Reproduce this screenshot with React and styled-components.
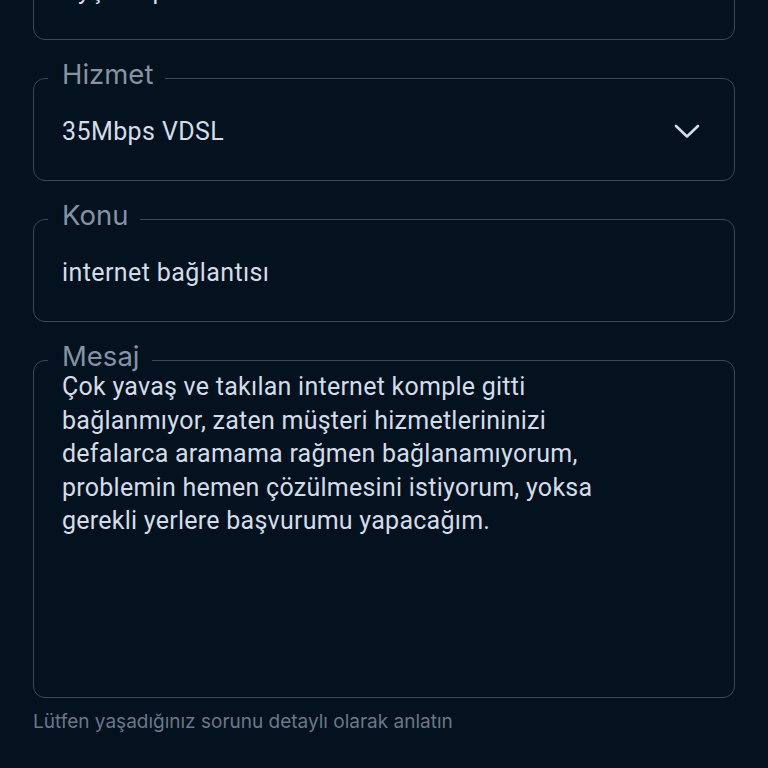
import React from "react";
import styled, { createGlobalStyle } from "styled-components";

const GlobalStyle = createGlobalStyle`
  html, body {
    margin: 0;
    padding: 0;
    background: #04111f;
    overflow: hidden;
  }
`;

const Page = styled.div`
  min-height: 100vh;
  background: #04111f;
  box-sizing: border-box;
  padding: 0 33px;
`;

const Form = styled.form`
  display: flex;
  flex-direction: column;
  gap: 28px;
  margin-top: -73px;
`;

const Field = styled.fieldset`
  margin: 0;
  padding: 0 28px 0 28px;
  border: 1.5px solid #3a4858;
  border-radius: 12px;
  min-width: 0;
`;

const Label = styled.legend`
  margin-left: -14px;
  padding: 0 12px 0 14px;
  line-height: 20px;
  font-family: Inter, "Noto Sans", sans-serif;
  font-size: 27.5px;
  color: #8593a3;

  span {
    display: block;
    transform: translateY(-4px);
  }
`;

const Row = styled.div`
  display: flex;
  align-items: center;
  justify-content: space-between;
  height: 86px;
  padding-bottom: 6px;
`;

const Value = styled.div`
  font-family: Roboto, "Noto Sans", sans-serif;
  font-size: 25px;
  letter-spacing: 0.4px;
  color: #d3dde9;
`;

const Chevron = styled.svg`
  width: 26px;
  height: 15px;
  margin-right: 6px;
`;

const Message = styled.div`
  height: 327px;
  font-family: Roboto, "Noto Sans", sans-serif;
  font-size: 25px;
  letter-spacing: 0.25px;
  line-height: 33.5px;
  color: #d3dde9;
  white-space: pre-line;
`;

const Helper = styled.div`
  margin: -16px 0 0 0;
  font-family: Inter, "Noto Sans", sans-serif;
  font-size: 19px;
  color: #6c7888;
`;

function OutlinedField({ label, children }) {
  return (
    <Field>
      <Label>
        <span>{label}</span>
      </Label>
      {children}
    </Field>
  );
}

const message = `Çok yavaş ve takılan internet komple gitti
bağlanmıyor, zaten müşteri hizmetlerininizi
defalarca aramama rağmen bağlanamıyorum,
problemin hemen çözülmesini istiyorum, yoksa
gerekli yerlere başvurumu yapacağım.`;

export default function App() {
  return (
    <Page>
      <GlobalStyle />
      <Form>
        <OutlinedField label="Ad Soyad">
          <Row>
            <Value>Ayşe Yapıcı</Value>
          </Row>
        </OutlinedField>
        <OutlinedField label="Hizmet">
          <Row>
            <Value>35Mbps VDSL</Value>
            <Chevron viewBox="0 0 26 15" fill="none">
              <polyline
                points="2,2 13,12.5 24,2"
                stroke="#d3dde9"
                strokeWidth="2.6"
                strokeLinecap="round"
                strokeLinejoin="round"
              />
            </Chevron>
          </Row>
        </OutlinedField>
        <OutlinedField label="Konu">
          <Row>
            <Value>internet bağlantısı</Value>
          </Row>
        </OutlinedField>
        <OutlinedField label="Mesaj">
          <Message>{message}</Message>
        </OutlinedField>
        <Helper>Lütfen yaşadığınız sorunu detaylı olarak anlatın</Helper>
      </Form>
    </Page>
  );
}
